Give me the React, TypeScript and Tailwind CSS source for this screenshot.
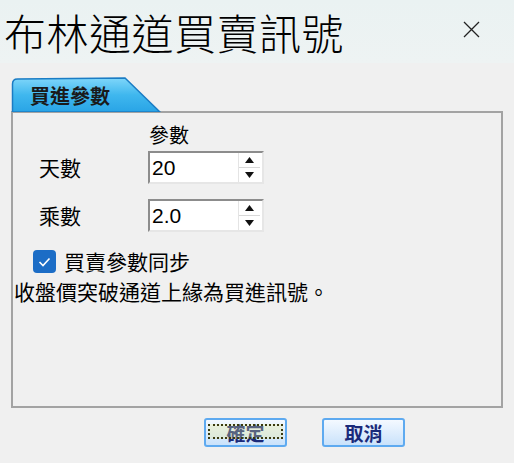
import React from 'react';

const cjk = { fontFamily: '"Noto Sans CJK TC", "Noto Sans CJK SC", sans-serif' };
const latin = { fontFamily: '"Liberation Sans", Arial, sans-serif' };

const SpinInput = ({ value }: { value: string }) => (
  <div className="flex h-[33px] w-[116px] border-2 border-t-[#8c8c8c] border-l-[#8c8c8c] border-b-[#e6e6e6] border-r-[#e6e6e6] bg-white">
    <div className="flex flex-1 items-center pl-[2px] text-[21px] leading-none text-black" style={latin}>
      {value}
    </div>
    <div className="mr-[2px] flex w-[22px] flex-col border-l border-[#e4e4e4]">
      <div className="flex flex-1 items-center justify-center border-b border-[#d8d8d8]">
        <svg width="9" height="6" viewBox="0 0 9 6">
          <polygon points="4.5,0 9,6 0,6" fill="#111" />
        </svg>
      </div>
      <div className="flex flex-1 items-center justify-center">
        <svg width="9" height="6" viewBox="0 0 9 6">
          <polygon points="0,0 9,0 4.5,6" fill="#111" />
        </svg>
      </div>
    </div>
  </div>
);

const DialogButton = ({ label, focused }: { label: string; focused?: boolean }) => (
  <button className="relative flex h-[29px] w-[83px] items-center justify-center rounded-[3px] border-2 border-[#5eaaf0] bg-gradient-to-b from-[#f4f9ff] to-[#c9e2fb] text-[19px] font-bold leading-none text-[#1a2a7a]" style={cjk}>
    {label}
    {focused && (
      <span className="absolute left-[2px] right-[2px] top-[4px] bottom-[6px] border-2 border-dotted border-[#3a3a10] bg-[#e8e890]/30"></span>
    )}
  </button>
);

export default function App() {
  return (
    <div className="flex h-[463px] w-[514px] flex-col overflow-hidden bg-[#f0f0f0] text-black" style={cjk}>
      {/* Title bar */}
      <div className="flex h-[63px] items-center justify-between bg-gradient-to-b from-[#eaf2f2] to-[#eef3f3] pl-[4px] pr-[34px]">
        <span className="text-[42px] font-light leading-none tracking-[0.5px]">布林通道買賣訊號</span>
        <svg width="17" height="17" viewBox="0 0 17 17" className="mb-[4px]">
          <path d="M1 1 L16 16 M16 1 L1 16" stroke="#222" strokeWidth="1.3" />
        </svg>
      </div>

      <div className="flex flex-1 flex-col px-[11px] pt-[14px]">
        {/* Tab */}
        <div className="relative h-[35px] w-[150px]">
          <svg width="150" height="35" viewBox="0 0 150 35" className="absolute inset-0">
            <defs>
              <linearGradient id="tabg" x1="0" y1="0" x2="0" y2="1">
                <stop offset="0" stopColor="#7fd6fa" />
                <stop offset="0.5" stopColor="#3fb7ee" />
                <stop offset="1" stopColor="#29a4e6" />
              </linearGradient>
            </defs>
            <path d="M1.5 35 L1.5 7 Q1.5 2 6.5 2 L114 1 L149 35 Z" fill="url(#tabg)" stroke="#1b7cc4" strokeWidth="1.5" />
          </svg>
          <div className="relative flex h-full items-center pl-[19px] pt-[2px] text-[20px] font-bold leading-none text-[#1a1a1a]">
            買進參數
          </div>
        </div>

        {/* Panel */}
        <div className="mt-[-1px] flex h-[297px] flex-col border-2 border-[#a3a3a3] pt-[12px]">
          <div className="pl-[136px] text-[20px] leading-none">參數</div>
          <div className="mt-[6px] grid grid-cols-[109px_116px] items-center gap-y-[15px] pl-[26px]">
            <span className="text-[21px] leading-none">天數</span>
            <SpinInput value="20" />
            <span className="text-[21px] leading-none">乘數</span>
            <SpinInput value="2.0" />
          </div>
          <div className="mt-[18px] flex items-center gap-[8px] pl-[20px]">
            <span className="flex h-[23px] w-[23px] items-center justify-center rounded-[4px] bg-[#1c6dc6]">
              <svg width="13" height="10" viewBox="0 0 13 10">
                <path d="M1.5 5 L5 8.5 L11.5 1.5" fill="none" stroke="#fff" strokeWidth="1.6" />
              </svg>
            </span>
            <span className="text-[21px] leading-none">買賣參數同步</span>
          </div>
          <div className="mt-[8px] pl-[1px] text-[21px] leading-none">收盤價突破通道上緣為買進訊號。</div>
        </div>

        {/* Buttons */}
        <div className="flex gap-[35px] pl-[193px] pt-[10px]">
          <DialogButton label="確定" focused />
          <DialogButton label="取消" />
        </div>
      </div>
    </div>
  );
}
